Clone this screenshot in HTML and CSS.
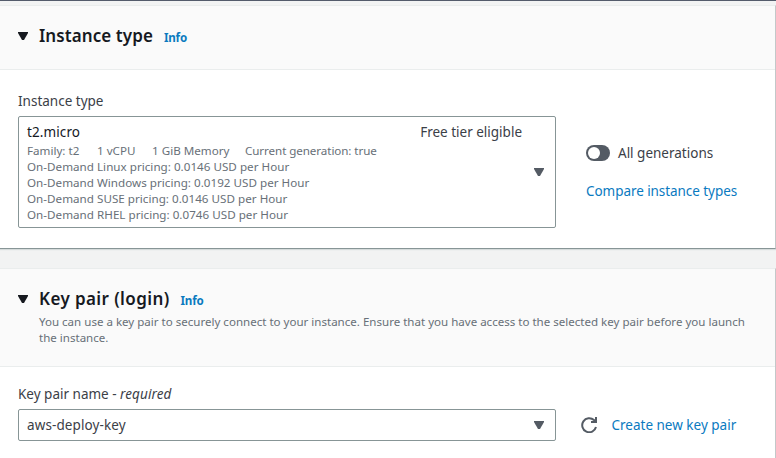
FILE: index.html
```html
<!DOCTYPE html>
<html lang="en">
<head>
<meta charset="utf-8">
<title>Launch an instance</title>
<link rel="stylesheet" href="styles.css">
</head>
<body>
<main class="page">
  <section class="card">
    <header class="card-header">
      <svg class="caret" viewBox="0 0 10 8"><path d="M0 0h10v1L6 8H4L0 1z"/></svg>
      <div class="heading">
        <h2 class="title title-instance">Instance type</h2>
        <a class="info">Info</a>
      </div>
    </header>
    <div class="card-body instance-body">
      <div class="field">
        <label class="label">Instance type</label>
        <div class="select select-large">
          <div class="option">
            <div class="option-top"><span>t2.micro</span><span>Free tier eligible</span></div>
            <div class="tags"><span class="family">Family: t2</span><span class="cpu">1 vCPU</span><span class="memory">1 GiB Memory</span><span class="generation">Current generation: true</span></div>
            <div class="price">On-Demand Linux pricing: 0.0146 USD per Hour</div>
            <div class="price">On-Demand Windows pricing: 0.0192 USD per Hour</div>
            <div class="price">On-Demand SUSE pricing: 0.0146 USD per Hour</div>
            <div class="price">On-Demand RHEL pricing: 0.0746 USD per Hour</div>
          </div>
          <svg class="caret caret-grey" viewBox="0 0 10 8"><path d="M0 0h10v1L6 8H4L0 1z"/></svg>
        </div>
      </div>
      <div class="side">
        <div class="toggle-row"><span class="toggle"><span class="knob"></span></span><span class="toggle-label">All generations</span></div>
        <a class="link link-compare">Compare instance types</a>
      </div>
    </div>
  </section>
  <section class="card">
    <header class="card-header header-key">
      <svg class="caret" viewBox="0 0 10 8"><path d="M0 0h10v1L6 8H4L0 1z"/></svg>
      <div>
        <div class="heading">
          <h2 class="title title-key">Key pair (login)</h2>
          <a class="info">Info</a>
        </div>
        <p class="description">You can use a key pair to securely connect to your instance. Ensure that you have access to the selected key pair before you launch<br>the instance.</p>
      </div>
    </header>
    <div class="card-body key-body">
      <div class="field">
        <label class="label">Key pair name - <em>required</em></label>
        <div class="select select-small">
          <span class="value">aws-deploy-key</span>
          <svg class="caret caret-grey" viewBox="0 0 10 8"><path d="M0 0h10v1L6 8H4L0 1z"/></svg>
        </div>
      </div>
      <div class="create">
        <svg class="refresh" viewBox="0 0 16 16"><path d="M15 10A7 7 0 1 1 13 3.1L15 5M10 5h5V0"/></svg>
        <a class="link">Create new key pair</a>
      </div>
    </div>
  </section>
</main>
</body>
</html>
```
FILE: styles.css
```css
* { box-sizing: border-box; }
body {
  margin: 0;
  height: 458px;
  overflow: hidden;
  background: #f2f3f3;
  color: #3b4047;
  font: 13.5px/20px "Noto Sans", "Open Sans", sans-serif;
}
.page {
  display: flex;
  flex-direction: column;
  gap: 19px;
  height: 458px;
  padding-top: 4px;
  border-top: 1px solid #545b6b;
  overflow: hidden;
}
.card {
  flex: none;
  background: #fff;
  border-top: 1px solid #eaeded;
  border-right: 1px solid #c3c8c9;
}
.card:first-child {
  border-bottom: 1px solid #879596;
  box-shadow: 0 1px 1px #d5dbdb;
}
.card-header {
  display: flex;
  gap: 11px;
  height: 64px;
  padding: 19px 18px 0;
  background: #fafafa;
  border-bottom: 1px solid #eaeded;
}
.header-key { height: 98px; }
.caret {
  flex: none;
  width: 10px;
  height: 8px;
  margin-top: 7px;
  fill: #16191f;
}
.heading { display: flex; align-items: baseline; gap: 11px; height: 22px; }
.title { margin: 0; font-size: 17px; line-height: 22px; font-weight: 600; color: #16191f; }
.title-instance { letter-spacing: .08px; }
.title-key { letter-spacing: .4px; }
.info { font-size: 11.6px; font-weight: 700; line-height: 16px; letter-spacing: -0.2px; color: #0a7abf; }
.description { margin: 4px 0 0; font-size: 11.55px; line-height: 16px; color: #687078; white-space: nowrap; }
.card-body { display: flex; padding-left: 18px; }
.instance-body { height: 178px; padding-top: 21px; gap: 30px; }
.key-body { height: 100px; padding-top: 17px; gap: 25px; }
.field { width: 538px; }
.label { display: block; height: 25px; }
em { letter-spacing: .1px; }
.select {
  display: flex;
  justify-content: space-between;
  align-items: center;
  border: 1px solid #879596;
  border-radius: 2px;
  background: #fff;
  padding: 0 11px 0 8px;
}
.select-large { height: 112px; }
.select-small { height: 32px; }
.select .caret { margin-top: 0; }
.caret-grey { fill: #545b64; }
.value { letter-spacing: .1px; }
.option { width: 495px; font-size: 11.63px; line-height: 16px; color: #687078; }
.option-top { display: flex; justify-content: space-between; font-size: 13.5px; line-height: 20px; color: #3b4047; }
.option-top span:first-child { color: #16191f; letter-spacing: .1px; }
.tags { display: flex; height: 17px; margin-bottom: -1px; line-height: 18px; white-space: nowrap; }
.price { position: relative; top: 1px; letter-spacing: .02px; }
.family { width: 70px; }
.cpu { width: 55px; }
.memory { width: 93px; }
.generation { letter-spacing: -.08px; }
.side { padding-top: 52px; }
.toggle-row { display: flex; align-items: center; gap: 8px; height: 20px; margin-bottom: 18px; }
.toggle { width: 24px; height: 16px; padding: 2px; border-radius: 8px; background: #545b64; }
.knob { display: block; width: 12px; height: 12px; border-radius: 50%; background: #fff; }
.link { color: #0a7abf; }
.link-compare { letter-spacing: -.06px; }
.create { display: flex; align-items: center; gap: 14.5px; height: 32px; margin-top: 25px; }
.refresh { width: 16px; height: 16px; fill: none; stroke: #545b64; stroke-width: 2; }
```
